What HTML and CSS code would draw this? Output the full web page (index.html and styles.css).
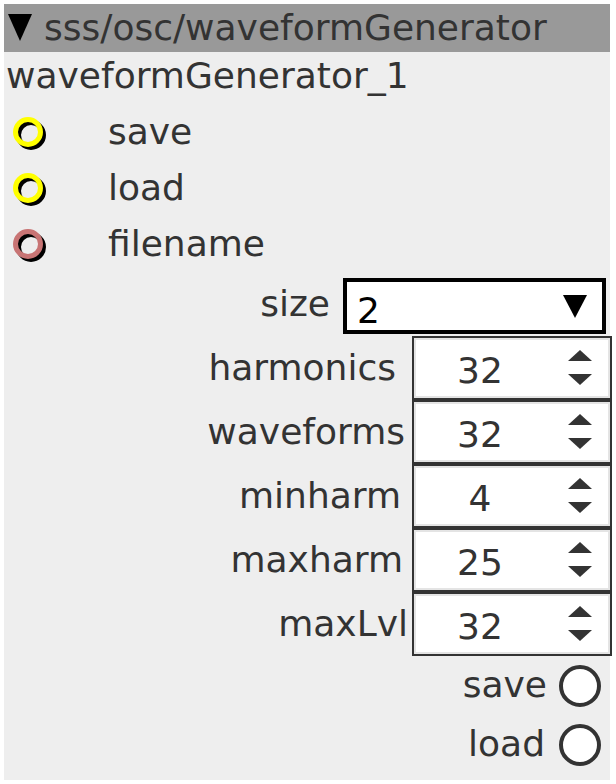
FILE: index.html
```html
<!DOCTYPE html>
<html>
<head>
    <title>sss/osc/waveformGenerator</title>
    <meta name="viewport" content="width=device-width, initial-scale=1">
    <link rel="stylesheet" href="styles.css">
</head>
<body>
    <div class="panel">
        <div class="panel-head">
            <svg class="caret" width="24" height="27" viewBox="0 0 24 27"><polygon points="0,0 24,0 12,27" fill="#000"/></svg>
            <span>sss/osc/waveformGenerator</span>
        </div>
        <div class="node-name">waveformGenerator_1</div>

        <!-- inlets -->
        <ul class="ports">
            <li class="port">
                <svg class="jack" width="40" height="40" viewBox="0 0 40 40">
                    <circle cx="23" cy="23" r="12.5" fill="none" stroke="#000" stroke-width="5"/>
                    <circle cx="20" cy="20" r="12.5" fill="none" stroke="#ffff00" stroke-width="5"/>
                </svg>
                <span>save</span>
            </li>
            <li class="port">
                <svg class="jack" width="40" height="40" viewBox="0 0 40 40">
                    <circle cx="23" cy="23" r="12.5" fill="none" stroke="#000" stroke-width="5"/>
                    <circle cx="20" cy="20" r="12.5" fill="none" stroke="#ffff00" stroke-width="5"/>
                </svg>
                <span>load</span>
            </li>
            <li class="port">
                <svg class="jack" width="40" height="40" viewBox="0 0 40 40">
                    <circle cx="23" cy="23" r="12.5" fill="none" stroke="#000" stroke-width="5"/>
                    <circle cx="20" cy="20" r="12.5" fill="none" stroke="#c87474" stroke-width="5"/>
                </svg>
                <span>filename</span>
            </li>
        </ul>

        <!-- parameters -->
        <div class="param param-size">
            <label>size</label>
            <div class="dropdown"><span class="dropdown-val">2</span><i class="dropdown-arrow"></i></div>
        </div>
        <div class="params">
            <div class="param">
                <label class="lbl-harmonics">harmonics</label>
                <div class="spin"><span class="spin-val">32</span><span class="spin-btns"><svg width="24" height="36" viewBox="0 0 24 36"><polygon points="12,0 24,11 0,11" fill="#333"/><polygon points="0,24 24,24 12,35" fill="#333"/></svg></span></div>
            </div>
            <div class="param">
                <label class="lbl-waveforms">waveforms</label>
                <div class="spin"><span class="spin-val">32</span><span class="spin-btns"><svg width="24" height="36" viewBox="0 0 24 36"><polygon points="12,0 24,11 0,11" fill="#333"/><polygon points="0,24 24,24 12,35" fill="#333"/></svg></span></div>
            </div>
            <div class="param">
                <label class="lbl-minharm">minharm</label>
                <div class="spin"><span class="spin-val">4</span><span class="spin-btns"><svg width="24" height="36" viewBox="0 0 24 36"><polygon points="12,0 24,11 0,11" fill="#333"/><polygon points="0,24 24,24 12,35" fill="#333"/></svg></span></div>
            </div>
            <div class="param">
                <label class="lbl-maxharm">maxharm</label>
                <div class="spin"><span class="spin-val">25</span><span class="spin-btns"><svg width="24" height="36" viewBox="0 0 24 36"><polygon points="12,0 24,11 0,11" fill="#333"/><polygon points="0,24 24,24 12,35" fill="#333"/></svg></span></div>
            </div>
            <div class="param">
                <label class="lbl-maxlvl">maxLvl</label>
                <div class="spin"><span class="spin-val">32</span><span class="spin-btns"><svg width="24" height="36" viewBox="0 0 24 36"><polygon points="12,0 24,11 0,11" fill="#333"/><polygon points="0,24 24,24 12,35" fill="#333"/></svg></span></div>
            </div>
        </div>

        <!-- buttons -->
        <div class="actions">
            <div class="action"><span>save</span><span class="radio"></span></div>
            <div class="action"><span class="lbl-load">load</span><span class="radio"></span></div>
        </div>
    </div>
</body>
</html>
```

FILE: styles.css
```css
body { margin: 0; background: #ffffff; font-family: "DejaVu Sans", sans-serif; font-size: 36px; color: #333; }

.panel { margin: 4px 0 0 4px; width: 606px; height: 776px; background: #eeeeee; }

.panel-head { display: flex; align-items: center; gap: 12px; height: 48px; line-height: 48px; padding-left: 4px; background: #999999; }
.caret { margin-bottom: 2px; }

.node-name { line-height: 48px; padding-left: 2px; }

.ports { list-style: none; margin: 0; padding: 4px 0 0 0; }
.port { display: flex; align-items: center; height: 56px; padding-left: 4px; }
.port span { margin-left: 60px; line-height: 42px; }

.param { display: flex; justify-content: flex-end; align-items: center; gap: 8px; }
.param label { line-height: 42px; white-space: nowrap; }

/* labels don't line up exactly in the original */
.lbl-harmonics { margin-right: 8px; }
.lbl-waveforms { margin-right: -1px; }
.lbl-minharm { margin-right: 3px; }
.lbl-maxharm { margin-right: 1px; }
.lbl-maxlvl { margin-right: -4px; }

.param-size { margin-top: 6px; margin-bottom: 2px; padding-right: 4px; gap: 13px; }
.param-size label { margin-bottom: 4px; }

.dropdown {
    display: flex;
    box-sizing: border-box;
    width: 263px;
    height: 56px;
    border: 4px solid #000;
    background: #fff;
    color: #000;
}
.dropdown-val { margin: 8px 0 0 10px; line-height: 42px; height: 40px; }
.dropdown-arrow {
    align-self: center;
    margin-left: auto;
    margin-right: 15px;
    border-left: 12px solid transparent;
    border-right: 12px solid transparent;
    border-top: 23px solid #000;
}

.params { margin-right: -2px; }

.spin {
    display: flex;
    align-items: center;
    box-sizing: border-box;
    width: 200px;
    height: 64px;
    border: 2px solid #333;
    box-shadow: inset 0 0 0 2px #e4e4e4;
    background: #fff;
}
.spin-val { width: 132px; text-align: center; line-height: 42px; padding-top: 6px; }
.spin-btns { display: flex; padding-left: 22px; }

.action { display: flex; justify-content: flex-end; align-items: center; gap: 12px; height: 59px; padding-right: 9px; }
.action span:first-child { line-height: 42px; margin-bottom: 2px; }
.lbl-load { margin-right: 2px; }
.radio { box-sizing: border-box; width: 42px; height: 42px; border: 4px solid #333; border-radius: 50%; background: #fff; }
```
